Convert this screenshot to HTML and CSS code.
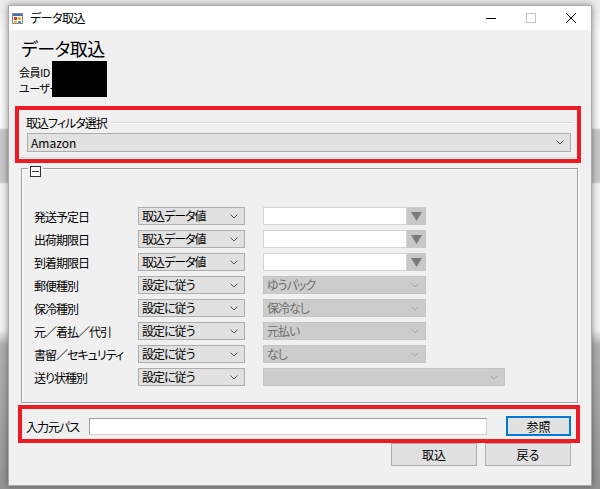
FILE: index.html
```html
<!DOCTYPE html>
<html lang="ja">
<head>
    <meta charset="utf-8">
    <title>データ取込</title>
    <link rel="stylesheet" href="styles.css">
</head>
<body>
<div class="desk">
    <div class="window">

        <!-- title bar -->
        <div class="titlebar">
            <svg class="appicon" width="11" height="11" viewBox="0 0 11 11">
                <rect x="0.5" y="0.5" width="10" height="10" fill="#fff" stroke="#8a8a8a"/>
                <rect x="1" y="1" width="9" height="2" fill="#3a6fc4"/>
                <rect x="2" y="4" width="3" height="3" fill="#e03a2c"/>
                <rect x="6" y="4" width="3" height="3" fill="#f2b516"/>
                <rect x="2" y="8" width="3" height="2" fill="#f2b516"/>
                <rect x="6" y="8" width="3" height="2" fill="#3a8ee0"/>
            </svg>
            <span class="title">データ取込</span>
            <div class="controls">
                <span class="ctl"><svg width="10" height="10" viewBox="0 0 10 10"><line x1="0" y1="5.5" x2="10" y2="5.5" stroke="#000"/></svg></span>
                <span class="ctl"><svg width="10" height="10" viewBox="0 0 10 10"><rect x="0.5" y="0.5" width="9" height="9" fill="none" stroke="#c4c4c4"/></svg></span>
                <span class="ctl"><svg width="10" height="10" viewBox="0 0 10 10"><path d="M0 0 L10 10 M10 0 L0 10" stroke="#000" fill="none"/></svg></span>
            </div>
        </div>

        <div class="client">
            <h1 class="heading">データ取込</h1>

            <div class="member">
                <div class="member-labels">
                    <div>会員ID</div>
                    <div>ユーザー</div>
                </div>
                <div class="masked"></div>
            </div>

            <!-- filter group (marked red) -->
            <div class="mark mark-filter">
                <div class="legend-row"><span>取込フィルタ選択</span><span class="rule"></span></div>
                <div class="combo combo-wide">
                    <span>Amazon</span>
                    <svg class="chev" width="8" height="5" viewBox="0 0 8 5"><polyline points="0.5,0.5 4,4 7.5,0.5" fill="none" stroke="#555"/></svg>
                </div>
                <div class="base-rule"></div>
            </div>

            <!-- options group -->
            <div class="group">
                <span class="toggle"><svg width="11" height="11" viewBox="0 0 11 11"><rect x="0.5" y="0.5" width="10" height="10" fill="#fff" stroke="#333"/><line x1="2" y1="5.5" x2="9" y2="5.5" stroke="#333"/></svg></span>

                <div class="row">
                    <span class="row-label">発送予定日</span>
                    <div class="combo"><span>取込データ値</span><svg class="chev" width="8" height="5" viewBox="0 0 8 5"><polyline points="0.5,0.5 4,4 7.5,0.5" fill="none" stroke="#555"/></svg></div>
                    <div class="field date"><span class="date-input"></span><span class="date-btn"><svg width="11" height="9" viewBox="0 0 11 9"><polygon points="0,0 11,0 5.5,9" fill="#7b7b7b"/></svg></span></div>
                </div>
                <div class="row">
                    <span class="row-label">出荷期限日</span>
                    <div class="combo"><span>取込データ値</span><svg class="chev" width="8" height="5" viewBox="0 0 8 5"><polyline points="0.5,0.5 4,4 7.5,0.5" fill="none" stroke="#555"/></svg></div>
                    <div class="field date"><span class="date-input"></span><span class="date-btn"><svg width="11" height="9" viewBox="0 0 11 9"><polygon points="0,0 11,0 5.5,9" fill="#7b7b7b"/></svg></span></div>
                </div>
                <div class="row">
                    <span class="row-label">到着期限日</span>
                    <div class="combo"><span>取込データ値</span><svg class="chev" width="8" height="5" viewBox="0 0 8 5"><polyline points="0.5,0.5 4,4 7.5,0.5" fill="none" stroke="#555"/></svg></div>
                    <div class="field date"><span class="date-input"></span><span class="date-btn"><svg width="11" height="9" viewBox="0 0 11 9"><polygon points="0,0 11,0 5.5,9" fill="#7b7b7b"/></svg></span></div>
                </div>
                <div class="row">
                    <span class="row-label">郵便種別</span>
                    <div class="combo"><span>設定に従う</span><svg class="chev" width="8" height="5" viewBox="0 0 8 5"><polyline points="0.5,0.5 4,4 7.5,0.5" fill="none" stroke="#555"/></svg></div>
                    <div class="field combo disabled"><span>ゆうパック</span><svg class="chev" width="8" height="5" viewBox="0 0 8 5"><polyline points="0.5,0.5 4,4 7.5,0.5" fill="none" stroke="#a8a8a8"/></svg></div>
                </div>
                <div class="row">
                    <span class="row-label">保冷種別</span>
                    <div class="combo"><span>設定に従う</span><svg class="chev" width="8" height="5" viewBox="0 0 8 5"><polyline points="0.5,0.5 4,4 7.5,0.5" fill="none" stroke="#555"/></svg></div>
                    <div class="field combo disabled"><span>保冷なし</span><svg class="chev" width="8" height="5" viewBox="0 0 8 5"><polyline points="0.5,0.5 4,4 7.5,0.5" fill="none" stroke="#a8a8a8"/></svg></div>
                </div>
                <div class="row">
                    <span class="row-label">元／着払／代引</span>
                    <div class="combo"><span>設定に従う</span><svg class="chev" width="8" height="5" viewBox="0 0 8 5"><polyline points="0.5,0.5 4,4 7.5,0.5" fill="none" stroke="#555"/></svg></div>
                    <div class="field combo disabled"><span>元払い</span><svg class="chev" width="8" height="5" viewBox="0 0 8 5"><polyline points="0.5,0.5 4,4 7.5,0.5" fill="none" stroke="#a8a8a8"/></svg></div>
                </div>
                <div class="row">
                    <span class="row-label">書留／セキュリティ</span>
                    <div class="combo"><span>設定に従う</span><svg class="chev" width="8" height="5" viewBox="0 0 8 5"><polyline points="0.5,0.5 4,4 7.5,0.5" fill="none" stroke="#555"/></svg></div>
                    <div class="field combo disabled"><span>なし</span><svg class="chev" width="8" height="5" viewBox="0 0 8 5"><polyline points="0.5,0.5 4,4 7.5,0.5" fill="none" stroke="#a8a8a8"/></svg></div>
                </div>
                <div class="row">
                    <span class="row-label">送り状種別</span>
                    <div class="combo"><span>設定に従う</span><svg class="chev" width="8" height="5" viewBox="0 0 8 5"><polyline points="0.5,0.5 4,4 7.5,0.5" fill="none" stroke="#555"/></svg></div>
                    <div class="field combo disabled long"><span></span><svg class="chev" width="8" height="5" viewBox="0 0 8 5"><polyline points="0.5,0.5 4,4 7.5,0.5" fill="none" stroke="#a8a8a8"/></svg></div>
                </div>
            </div>

            <!-- input path (marked red) -->
            <div class="mark mark-path">
                <span class="path-label">入力元パス</span>
                <span class="path-input"></span>
                <span class="btn btn-browse">参照</span>
            </div>

            <div class="actions">
                <span class="btn">取込</span>
                <span class="btn">戻る</span>
            </div>
        </div>
    </div>
</div>
</body>
</html>
```

FILE: styles.css
```css
html, body
{
    margin: 0;
    padding: 0;
}
body
{
    font-family: "Noto Sans CJK JP", "Noto Sans", sans-serif;
    font-size: 12px;
    font-feature-settings: "palt";
    color: #000;
}

/* desktop behind the dialog */
.desk
{
    width: 600px;
    height: 489px;
    box-sizing: border-box;
    padding: 5px 8px 0;
    overflow: hidden;
    background: linear-gradient(to bottom, #ececec 0, #f7f7f7 30px, #f7f7f7 128px, #c9c9c9 130px, #c9c9c9 182px, #f2f2f2 184px, #f2f2f2 330px, #b2b2b2 345px, #959595 489px);
}

.window
{
    width: 584px;
    height: 481px;
    box-sizing: border-box;
    border: 1px solid #a9a9a9;
    background: #f0f0f0;
    box-shadow: 0 0 7px rgba(0,0,0,0.45);
    display: flex;
    flex-direction: column;
}

.titlebar
{
    height: 24px;
    flex: none;
    background: #fff;
    display: flex;
    align-items: center;
}
.appicon
{
    margin-left: 3px;
}
.title
{
    margin-left: 7px;
    line-height: 24px;
    letter-spacing: -0.5px;
}
.controls
{
    margin-left: auto;
    display: flex;
}
.ctl
{
    width: 40px;
    height: 24px;
    display: flex;
    align-items: center;
    justify-content: center;
}

.client
{
    flex: 1;
    padding-top: 6px;
}
.heading
{
    margin: 0 0 0 12px;
    height: 24px;
    font-size: 18px;
    line-height: 24px;
    font-weight: normal;
    letter-spacing: -0.5px;
}

.member
{
    display: flex;
    margin: 1px 0 0 10px;
    height: 36px;
}
.member-labels
{
    width: 33px;
    padding-top: 3px;
    font-size: 11px;
    line-height: 16px;
    letter-spacing: -0.5px;
    white-space: nowrap;
}
.masked
{
    width: 55px;
    height: 36px;
    background: #000;
}

/* red annotation frames */
.mark
{
    border: 4px solid #ed1c24;
    box-sizing: border-box;
}
.mark-filter
{
    margin: 9px 0 0 6px;
    width: 566px;
    height: 57px;
    padding: 6px 4px 0 8px;
}
.legend-row
{
    display: flex;
    align-items: center;
    height: 14px;
    line-height: 14px;
    margin-left: -1px;
    letter-spacing: -1px;
}
.rule
{
    flex: 1;
    margin-left: 4px;
    border-top: 1px solid #d9d9d9;
    border-bottom: 1px solid #fff;
}
.base-rule
{
    margin: 5px -4px 0 -8px;
    border-top: 1px solid #d9d9d9;
    border-bottom: 1px solid #fff;
}

.combo
{
    width: 107px;
    height: 18px;
    box-sizing: border-box;
    border: 1px solid #adadad;
    background: #e1e1e1;
    display: flex;
    align-items: center;
    padding: 0 6px 0 3px;
    white-space: nowrap;
}
.combo span
{
    flex: 1;
    line-height: 16px;
    letter-spacing: -1px;
}
.combo-wide
{
    margin-top: 3px;
    width: 544px;
    height: 19px;
}
.combo-wide span
{
    letter-spacing: 0;
}
.combo.disabled
{
    width: 163px;
    background: #cccccc;
    border-color: #c4c4c4;
    color: #6d6d6d;
}
.combo.disabled.long
{
    width: 242px;
}

.group
{
    position: relative;
    margin: 5px 0 0 12px;
    width: 557px;
    height: 235px;
    box-sizing: border-box;
    border: 1px solid #a0a0a0;
    box-shadow: inset 1px 1px 0 #fff, 1px 1px 0 #fff;
    padding: 38px 0 0 12px;
}
.toggle
{
    position: absolute;
    top: -3px;
    left: 6px;
    padding: 0 2px;
    height: 11px;
    background: #f0f0f0;
    display: flex;
}

.row
{
    display: flex;
    align-items: center;
    height: 18px;
    margin-bottom: 5px;
}
.row-label
{
    width: 104px;
    letter-spacing: -1px;
    white-space: nowrap;
}
.field
{
    margin-left: 18px;
}
.date
{
    display: flex;
    height: 18px;
}
.date-input
{
    width: 144px;
    height: 18px;
    box-sizing: border-box;
    border: 1px solid #d4d4d4;
    background: #fff;
}
.date-btn
{
    width: 19px;
    height: 18px;
    background: #c8c8c8;
    display: flex;
    align-items: center;
    justify-content: center;
}

.mark-path
{
    margin: 2px 0 0 9px;
    width: 562px;
    height: 38px;
    padding: 4px 0 0 4px;
    display: flex;
    align-items: center;
}
.path-label
{
    width: 63px;
    letter-spacing: -1px;
    white-space: nowrap;
}
.path-input
{
    width: 398px;
    height: 17px;
    box-sizing: border-box;
    border: 1px solid #a0a0a0;
    border-bottom-color: #d0d0d0;
    border-right-color: #d0d0d0;
    background: #fff;
}

.btn
{
    width: 86px;
    height: 23px;
    box-sizing: border-box;
    border: 1px solid #adadad;
    background: #e1e1e1;
    display: flex;
    align-items: center;
    justify-content: center;
}
.btn-browse
{
    margin-left: 19px;
    width: 65px;
    height: 20px;
    border: 2px solid #0078d7;
}

.actions
{
    display: flex;
    justify-content: flex-end;
    gap: 8px;
    padding-right: 20px;
}
```
